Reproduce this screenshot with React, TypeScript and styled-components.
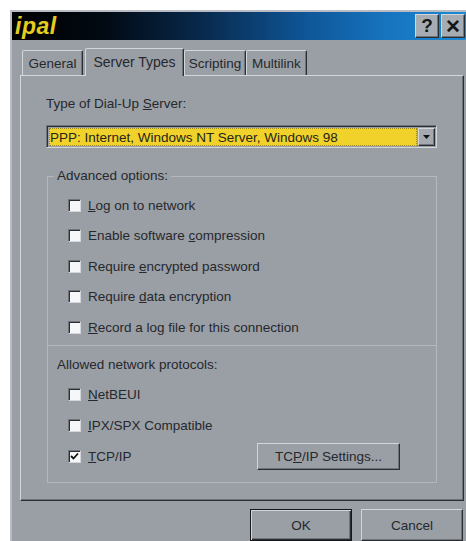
import React from "react";
import styled, { createGlobalStyle, css } from "styled-components";

const face = "#9a9fa6";
const hilite = "#d3d7dc";
const shadow = "#6f747b";
const dark = "#2a2d32";
const ink = "#26282c";

const GlobalStyle = createGlobalStyle`
  html, body {
    margin: 0;
    padding: 0;
    background: #ffffff;
    overflow: hidden;
  }
  body {
    font-family: "Liberation Sans", Arial, sans-serif;
    font-size: 13.5px;
    color: ${ink};
  }
`;

const raised = css`
  border-style: solid;
  border-width: 1px;
  border-color: ${hilite} ${dark} ${dark} ${hilite};
  box-shadow: inset -1px -1px 0 ${shadow};
`;

/* The dialog continues past the right and bottom edges of the page. */
const Window = styled.div`
  box-sizing: border-box;
  margin: 10px 0 0 10px;
  width: 460px;
  height: 531px;
  overflow: hidden;
  background: ${face};
  border-style: solid;
  border-width: 2px 2px 0 2px;
  border-color: #b9bdc3 ${dark} ${dark} #b9bdc3;
  display: flex;
  flex-direction: column;
`;

const TitleBar = styled.div`
  height: 28px;
  flex: none;
  display: flex;
  align-items: center;
  justify-content: space-between;
  padding: 0 3px 0 3px;
  background: linear-gradient(
    to right,
    #000000 0%,
    #010912 20%,
    #082a4d 42%,
    #0e5596 64%,
    #1672bd 81%,
    #1b8ad5 100%
  );
`;

const Title = styled.span`
  font-family: "Liberation Sans", Arial, sans-serif;
  font-weight: 700;
  font-style: italic;
  font-size: 23px;
  letter-spacing: 0.5px;
  color: #e6cc1f;
  line-height: 28px;
`;

const Controls = styled.div`
  display: flex;
  gap: 2px;
`;

const CaptionButton = styled.div`
  box-sizing: border-box;
  width: 24px;
  height: 24px;
  background: #a7acb2;
  ${raised};
  display: flex;
  align-items: center;
  justify-content: center;
  font-weight: 700;
  font-size: 19px;
  color: #15161a;
`;

const Body = styled.div`
  flex: 1;
  display: flex;
  flex-direction: column;
  padding: 8px 0 0 8px;
`;

const TabStrip = styled.div`
  display: flex;
  align-items: flex-end;
  height: 27px;
  padding-left: 2px;
`;

const Tab = styled.div<{ $active?: boolean; $w: number; $gap?: number }>`
  box-sizing: border-box;
  width: ${(p) => p.$w}px;
  margin-right: ${(p) => p.$gap ?? 0}px;
  height: ${(p) => (p.$active ? 28 : 25)}px;
  margin-bottom: ${(p) => (p.$active ? -1 : 0)}px;
  position: relative;
  z-index: ${(p) => (p.$active ? 2 : 1)};
  background: ${face};
  border-style: solid;
  border-width: 1px 1px 0 1px;
  border-color: ${hilite} ${dark} transparent ${hilite};
  border-radius: 2px 2px 0 0;
  box-shadow: inset -1px 0 0 ${shadow};
  display: flex;
  align-items: center;
  justify-content: center;
  font-size: ${(p) => (p.$active ? 14 : 13.5)}px;
  padding-bottom: ${(p) => (p.$active ? 2 : 0)}px;
  color: ${ink};
  white-space: nowrap;
`;

const Panel = styled.div`
  box-sizing: border-box;
  width: 444px;
  height: 426px;
  flex: none;
  background: ${face};
  ${raised};
  padding: 20px 26px 16px 25px;
  display: flex;
  flex-direction: column;
`;

const FieldLabel = styled.div<{ $indent?: number }>`
  line-height: 16px;
  height: 16px;
  margin-left: ${(p) => p.$indent ?? 0}px;
  white-space: nowrap;
`;

const Select = styled.div`
  box-sizing: border-box;
  margin-top: 13px;
  height: 23px;
  display: flex;
  align-items: stretch;
  background: ${face};
  border-style: solid;
  border-width: 1px;
  border-color: ${shadow} ${hilite} ${hilite} ${shadow};
  box-shadow: inset 1px 1px 0 ${dark};
  padding: 2px 1px 1px 2px;
`;

const SelectValue = styled.div`
  flex: 1;
  background: #f1d22b;
  outline: 1px dotted #9c8a1c;
  outline-offset: -1px;
  display: flex;
  align-items: center;
  padding-left: 1px;
  white-space: nowrap;
  color: #26241a;
`;

const DropButton = styled.div`
  box-sizing: border-box;
  width: 17px;
  margin-left: 1px;
  background: #a5aab0;
  ${raised};
  display: flex;
  align-items: center;
  justify-content: center;
`;

const GroupTop = styled.fieldset`
  margin: 20px 0 0 1px;
  padding: 6px 0 2px 20px;
  border: 1px solid #b4b8be;
  border-bottom: none;
  min-inline-size: 0;
`;

const Legend = styled.legend`
  margin-left: -14px;
  padding: 0 3px;
  line-height: 16px;
`;

const GroupBottom = styled.div`
  margin-left: 1px;
  padding: 11px 36px 10px 20px;
  border: 1px solid #b4b8be;
  display: flex;
  flex-direction: column;
`;

const Rows = styled.div<{ $h: number; $offset?: number }>`
  display: grid;
  grid-auto-rows: ${(p) => p.$h}px;
  margin-top: ${(p) => p.$offset ?? 0}px;
`;

const Row = styled.div`
  display: flex;
  align-items: center;
  justify-content: space-between;
`;

const Check = styled.label`
  display: flex;
  align-items: center;
  gap: 7px;
  white-space: nowrap;
`;

const Box = styled.span`
  box-sizing: border-box;
  width: 13px;
  height: 13px;
  flex: none;
  background: #f6f7f8;
  border-style: solid;
  border-width: 1px;
  border-color: ${shadow} ${hilite} ${hilite} ${shadow};
  box-shadow: inset 1px 1px 0 ${dark};
  display: flex;
  align-items: center;
  justify-content: center;
`;

const PushButton = styled.div<{ $w: number; $h: number; $default?: boolean }>`
  box-sizing: border-box;
  width: ${(p) => p.$w}px;
  height: ${(p) => p.$h}px;
  background: ${face};
  display: flex;
  align-items: center;
  justify-content: center;
  white-space: nowrap;
  ${(p) =>
    p.$default
      ? css`
          border: 1px solid #15171a;
          box-shadow: inset 1px 1px 0 ${hilite}, inset -1px -1px 0 ${dark},
            inset -2px -2px 0 ${shadow};
        `
      : raised}
`;

const ButtonRow = styled.div`
  width: 444px;
  margin-top: 8px;
  display: flex;
  justify-content: flex-end;
  gap: 9px;
  padding-right: 1px;
  box-sizing: border-box;
`;

const Arrow = () => (
  <svg width="7" height="4" viewBox="0 0 7 4">
    <path d="M0 0h7L3.5 4z" fill="#111" />
  </svg>
);

const Tick = () => (
  <svg width="9" height="9" viewBox="0 0 9 9">
    <path d="M1 4l2.5 2.5L8 1.5" stroke="#111" strokeWidth="1.8" fill="none" />
  </svg>
);

type Option = { pre?: string; hot: string; post: string; checked?: boolean };

const advanced: Option[] = [
  { hot: "L", post: "og on to network" },
  { pre: "Enable software ", hot: "c", post: "ompression" },
  { pre: "Require ", hot: "e", post: "ncrypted password" },
  { pre: "Require ", hot: "d", post: "ata encryption" },
  { hot: "R", post: "ecord a log file for this connection" },
];

const CheckItem = ({ pre, hot, post, checked }: Option) => (
  <Check>
    <Box>{checked && <Tick />}</Box>
    <span>
      {pre}
      <u>{hot}</u>
      {post}
    </span>
  </Check>
);

export default function App() {
  return (
    <>
      <GlobalStyle />
      <Window>
        <TitleBar>
          <Title>ipal</Title>
          <Controls>
            <CaptionButton>?</CaptionButton>
            <CaptionButton>✕</CaptionButton>
          </Controls>
        </TitleBar>
        <Body>
          <TabStrip>
            <Tab $w={61} $gap={2}>General</Tab>
            <Tab $w={99} $active>Server Types</Tab>
            <Tab $w={62}>Scripting</Tab>
            <Tab $w={61}>Multilink</Tab>
          </TabStrip>
          <Panel>
            <FieldLabel>
              Type of Dial-Up <u>S</u>erver:
            </FieldLabel>
            <Select>
              <SelectValue>PPP: Internet, Windows NT Server, Windows 98</SelectValue>
              <DropButton>
                <Arrow />
              </DropButton>
            </Select>
            <GroupTop>
              <Legend>Advanced options:</Legend>
              <Rows $h={30.5}>
                {advanced.map((o) => (
                  <Row key={o.post}>
                    <CheckItem {...o} />
                  </Row>
                ))}
              </Rows>
            </GroupTop>
            <GroupBottom>
              <FieldLabel $indent={-11}>Allowed network protocols:</FieldLabel>
              <Rows $h={31} $offset={6.5}>
                <Row>
                  <CheckItem hot="N" post="etBEUI" />
                </Row>
                <Row>
                  <CheckItem hot="I" post="PX/SPX Compatible" />
                </Row>
                <Row>
                  <CheckItem hot="T" post="CP/IP" checked />
                  <PushButton $w={143} $h={27}>
                    TC<u>P</u>/IP Settings...
                  </PushButton>
                </Row>
              </Rows>
            </GroupBottom>
          </Panel>
          <ButtonRow>
            <PushButton $w={102} $h={32} $default>
              OK
            </PushButton>
            <PushButton $w={102} $h={32}>
              Cancel
            </PushButton>
          </ButtonRow>
        </Body>
      </Window>
    </>
  );
}
